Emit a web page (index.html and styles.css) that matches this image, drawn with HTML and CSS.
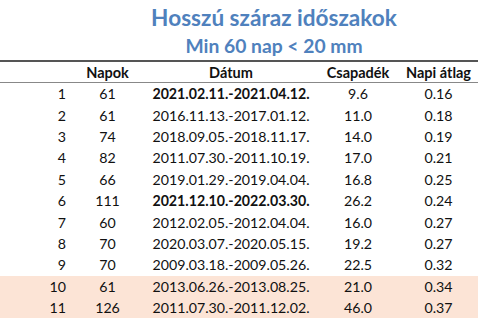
FILE: index.html
```html
<!DOCTYPE html>
<html lang="hu">
<head>
    <meta charset="UTF-8">
    <meta name="viewport" content="width=device-width, initial-scale=1.0">
    <title>Hosszú száraz időszakok</title>
    <link rel="stylesheet" href="styles.css">
</head>
<body>

    <div class="sheet">
        <div class="titles">
            <h1>Hosszú száraz időszakok</h1>
            <h2>Min 60 nap &lt; 20 mm</h2>
        </div>

        <table class="periods">
            <colgroup>
                <col class="col-idx">
                <col class="col-days">
                <col class="col-date">
                <col class="col-rain">
                <col class="col-avg">
            </colgroup>
            <thead>
                <tr>
                    <th></th>
                    <th>Napok</th>
                    <th>Dátum</th>
                    <th>Csapadék</th>
                    <th>Napi átlag</th>
                </tr>
            </thead>
            <tbody>
                <tr><td>1</td><td>61</td><td class="bold">2021.02.11.-2021.04.12.</td><td>9.6</td><td>0.16</td></tr>
                <tr><td>2</td><td>61</td><td>2016.11.13.-2017.01.12.</td><td>11.0</td><td>0.18</td></tr>
                <tr><td>3</td><td>74</td><td>2018.09.05.-2018.11.17.</td><td>14.0</td><td>0.19</td></tr>
                <tr><td>4</td><td>82</td><td>2011.07.30.-2011.10.19.</td><td>17.0</td><td>0.21</td></tr>
                <tr><td>5</td><td>66</td><td>2019.01.29.-2019.04.04.</td><td>16.8</td><td>0.25</td></tr>
                <tr><td>6</td><td>111</td><td class="bold">2021.12.10.-2022.03.30.</td><td>26.2</td><td>0.24</td></tr>
                <tr><td>7</td><td>60</td><td>2012.02.05.-2012.04.04.</td><td>16.0</td><td>0.27</td></tr>
                <tr><td>8</td><td>70</td><td>2020.03.07.-2020.05.15.</td><td>19.2</td><td>0.27</td></tr>
                <tr><td>9</td><td>70</td><td>2009.03.18.-2009.05.26.</td><td>22.5</td><td>0.32</td></tr>
                <tr class="marked"><td>10</td><td>61</td><td>2013.06.26.-2013.08.25.</td><td>21.0</td><td>0.34</td></tr>
                <tr class="marked"><td>11</td><td>126</td><td>2011.07.30.-2011.12.02.</td><td>46.0</td><td>0.37</td></tr>
            </tbody>
        </table>
    </div>

</body>
</html>
```

FILE: styles.css
```css
body {
    margin: 0;
    font-family: Lato, "Open Sans", sans-serif;
    color: #111;
    background-color: white;
}

.sheet {
    width: 478px;
}

.titles {
    margin-left: 70px;
    text-align: center;
    color: #4f81bd;
}

h1 {
    margin: 0;
    padding-top: 4px;
    font-size: 22.6px;
    line-height: 28px;
}

h2 {
    margin: 0;
    font-size: 19.3px;
    line-height: 28px;
}

.periods {
    width: 478px;
    table-layout: fixed;
    border-collapse: separate;
    border-spacing: 0;
    font-size: 14.2px;
}

.col-idx { width: 70px; }
.col-days { width: 75px; }
.col-date { width: 172px; }
.col-rain { width: 82px; }
.col-avg { width: 79px; }

.periods th {
    height: 20px;
    padding: 0;
    font-size: 14.5px;
    font-weight: bold;
    border-top: 2px solid #555;
    border-bottom: 1px solid #888;
    white-space: nowrap;
}

.periods td {
    height: 21.4px;
    padding: 0;
    text-align: center;
    white-space: nowrap;
}

.periods td:first-child {
    text-align: right;
    padding-right: 4px;
}

.periods .bold {
    font-weight: bold;
}

.marked td {
    background-color: #fce4d6;
}
```
